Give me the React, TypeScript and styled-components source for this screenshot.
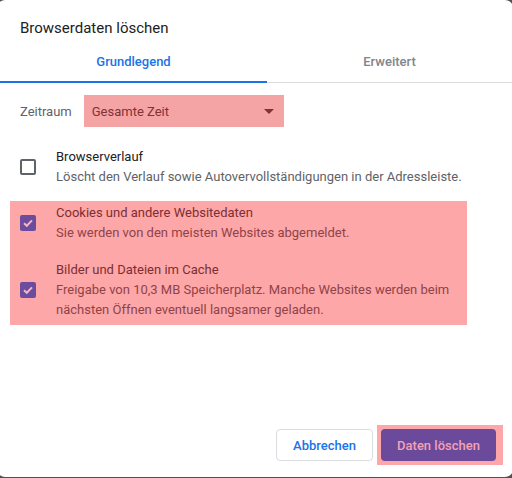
import React from "react";
import styled, { createGlobalStyle } from "styled-components";

const Global = createGlobalStyle`
  html, body { margin: 0; padding: 0; background: #505050; overflow: hidden; }
  body { font-family: Roboto, "Liberation Sans", sans-serif; }
  #root { width: 512px; height: 478px; overflow: hidden; }
`;

const Dialog = styled.div`
  box-sizing: border-box;
  width: 516px;
  margin-left: -3px;
  height: 477px;
  background: #ffffff;
  border-radius: 8px;
  display: flex;
  flex-direction: column;
  padding-left: 3px;
  padding-right: 1px;
`;

const Title = styled.div`
  padding: 18px 20px 0;
  font-size: 15px;
  line-height: 20px;
  color: #202124;
`;

const TabBar = styled.div`
  display: flex;
  margin-top: 4px;
  border-bottom: 1px solid #dadce0;
`;

const Tab = styled.div<{ $active?: boolean }>`
  flex: ${(p) => (p.$active ? "0 0 267px" : "1")};
  height: 39px;
  display: flex;
  align-items: center;
  justify-content: center;
  font-size: 13px;
  font-weight: 500;
  color: ${(p) => (p.$active ? "#1a73e8" : "#80868b")};
  border-bottom: 2px solid ${(p) => (p.$active ? "#1a73e8" : "transparent")};
  margin-bottom: -1px;
`;

const RangeRow = styled.div`
  display: flex;
  align-items: center;
  gap: 12px;
  padding: 12px 20px 0;
`;

const Label = styled.span`
  font-size: 13px;
  color: #5f6368;
`;

const Select = styled.div`
  box-sizing: border-box;
  width: 200px;
  height: 32px;
  background: #f4a4a4;
  display: flex;
  align-items: center;
  justify-content: space-between;
  padding: 0 10px 0 8px;
  font-size: 13px;
  color: #7f3336;
`;

const Caret = styled.span`
  width: 0;
  height: 0;
  border-left: 5px solid transparent;
  border-right: 5px solid transparent;
  border-top: 5px solid #7f3336;
`;

const List = styled.div`
  display: flex;
  flex-direction: column;
  padding-top: 20px;
`;

const Highlight = styled.div`
  margin: 14px 0 0 10px;
  width: 457px;
  background: #fea7a8;
  padding: 2px 0 5px;
  display: flex;
  flex-direction: column;
  gap: 17px;
`;

const Row = styled.div<{ $inset?: boolean }>`
  display: flex;
  align-items: center;
  gap: 20px;
  padding-left: ${(p) => (p.$inset ? "10px" : "20px")};
`;

const Box = styled.div<{ $checked?: boolean }>`
  box-sizing: border-box;
  flex: none;
  width: 16px;
  height: 16px;
  border-radius: 2px;
  border: ${(p) => (p.$checked ? "none" : "2px solid #5f6368")};
  background: ${(p) => (p.$checked ? "#6b4c9d" : "transparent")};
  display: flex;
  align-items: center;
  justify-content: center;
`;

const Texts = styled.div`
  display: flex;
  flex-direction: column;
  font-size: 13px;
  line-height: 20px;
`;

const ItemTitle = styled.div<{ $hl?: boolean }>`
  color: ${(p) => (p.$hl ? "#7c2e33" : "#202124")};
`;

const ItemDesc = styled.div<{ $hl?: boolean }>`
  color: ${(p) => (p.$hl ? "#8f4348" : "#5f6368")};
`;

const Spacer = styled.div`
  flex: 1;
`;

const Footer = styled.div`
  display: flex;
  justify-content: flex-end;
  align-items: center;
  gap: 4px;
  padding: 0 9px 12px 0;
`;

const CancelButton = styled.button`
  box-sizing: border-box;
  width: 97px;
  height: 32px;
  background: #fff;
  border: 1px solid #dadce0;
  border-radius: 4px;
  color: #1a73e8;
  font-family: Roboto, "Liberation Sans", sans-serif;
  font-size: 13px;
  font-weight: 500;
`;

const ConfirmWrap = styled.div`
  background: #fea7a8;
  padding: 4px 7px 4px 4px;
  display: flex;
`;

const ConfirmButton = styled.button`
  box-sizing: border-box;
  width: 115px;
  height: 32px;
  background: #6b4a9b;
  border: none;
  border-radius: 4px;
  color: #f2a2b6;
  font-family: Roboto, "Liberation Sans", sans-serif;
  font-size: 13px;
  font-weight: 500;
`;

const Check = () => (
  <svg width="12" height="12" viewBox="0 0 12 12">
    <path d="M2 6.2 L4.8 8.8 L10 3.4" fill="none" stroke="#f3b6c6" strokeWidth="2" />
  </svg>
);

export default function App() {
  return (
    <>
      <Global />
      <Dialog>
        <Title>Browserdaten löschen</Title>
        <TabBar>
          <Tab $active>Grundlegend</Tab>
          <Tab>Erweitert</Tab>
        </TabBar>
        <RangeRow>
          <Label>Zeitraum</Label>
          <Select>
            <span>Gesamte Zeit</span>
            <Caret />
          </Select>
        </RangeRow>
        <List>
          <Row>
            <Box />
            <Texts>
              <ItemTitle>Browserverlauf</ItemTitle>
              <ItemDesc>Löscht den Verlauf sowie Autovervollständigungen in der Adressleiste.</ItemDesc>
            </Texts>
          </Row>
          <Highlight>
            <Row $inset>
              <Box $checked>
                <Check />
              </Box>
              <Texts>
                <ItemTitle $hl>Cookies und andere Websitedaten</ItemTitle>
                <ItemDesc $hl>Sie werden von den meisten Websites abgemeldet.</ItemDesc>
              </Texts>
            </Row>
            <Row $inset>
              <Box $checked>
                <Check />
              </Box>
              <Texts>
                <ItemTitle $hl>Bilder und Dateien im Cache</ItemTitle>
                <ItemDesc $hl>
                  Freigabe von 10,3 MB Speicherplatz. Manche Websites werden beim
                  <br />
                  nächsten Öffnen eventuell langsamer geladen.
                </ItemDesc>
              </Texts>
            </Row>
          </Highlight>
        </List>
        <Spacer />
        <Footer>
          <CancelButton>Abbrechen</CancelButton>
          <ConfirmWrap>
            <ConfirmButton>Daten löschen</ConfirmButton>
          </ConfirmWrap>
        </Footer>
      </Dialog>
    </>
  );
}
